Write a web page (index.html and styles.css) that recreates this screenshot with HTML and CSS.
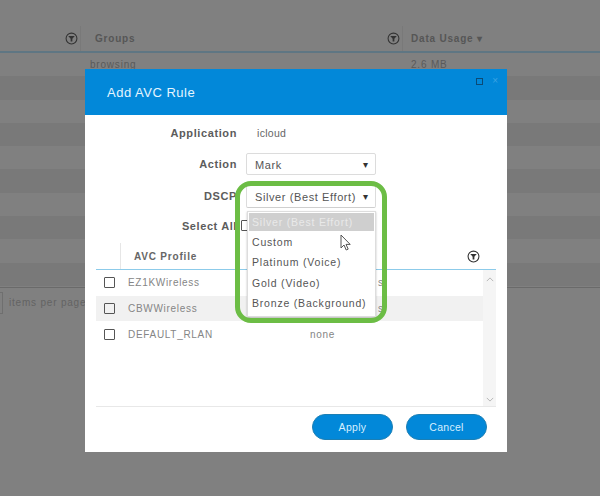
FILE: index.html
```html
<!DOCTYPE html>
<html lang="en">
<head>
  <meta charset="UTF-8">
  <title>Add AVC Rule</title>
  <link rel="stylesheet" href="styles.css">
</head>
<body>
  <!-- background table, dimmed by the overlay -->
  <div class="page">
    <div class="page-head">
      <div class="page-col col-first">
        <svg class="filter-icon" viewBox="0 0 12 12"><circle cx="6" cy="6" r="5" fill="none" stroke="currentColor" stroke-width="1"/><path d="M3 3.6h6L6.8 6.2v2.6H5.2V6.2z" fill="currentColor"/></svg>
      </div>
      <div class="page-col col-groups">
        <span>Groups</span>
        <svg class="filter-icon" viewBox="0 0 12 12"><circle cx="6" cy="6" r="5" fill="none" stroke="currentColor" stroke-width="1"/><path d="M3 3.6h6L6.8 6.2v2.6H5.2V6.2z" fill="currentColor"/></svg>
      </div>
      <div class="page-col col-usage">Data Usage &#9662;</div>
    </div>
    <div class="page-row"><span class="cell-groups">browsing</span><span>2.6 MB</span></div>
    <div class="page-row dark"></div>
    <div class="page-row"></div>
    <div class="page-row dark"></div>
    <div class="page-row"></div>
    <div class="page-row dark"></div>
    <div class="page-row"></div>
    <div class="page-row dark"></div>
    <div class="page-row"></div>
    <div class="page-row dark"></div>
    <div class="pager"><span class="pager-box"></span><span>items per page</span></div>
  </div>

  <div class="modal">
    <div class="modal-header">
      <h2>Add AVC Rule</h2>
      <div class="modal-tools">
        <span class="tool-max"></span>
        <span class="tool-close">&times;</span>
      </div>
    </div>

    <div class="form">
      <div class="form-row row-app">
        <label>Application</label>
        <span class="value">icloud</span>
      </div>
      <div class="form-row row-action">
        <label>Action</label>
        <div class="select">Mark<span class="caret">&#9662;</span></div>
      </div>
      <div class="form-row row-dscp">
        <label>DSCP</label>
        <div class="select select-open">Silver (Best Effort)<span class="caret">&#9662;</span>
          <ul class="dropdown">
            <li class="selected">Silver (Best Effort)</li>
            <li>Custom</li>
            <li>Platinum (Voice)</li>
            <li>Gold (Video)</li>
            <li>Bronze (Background)</li>
          </ul>
          <div class="highlight"></div>
          <svg class="cursor" viewBox="0 0 12 18"><path d="M1 1v13l3-3 2.2 5 2-.9L6 10.4h4.2z" fill="#fff" stroke="#555" stroke-width="1"/></svg>
        </div>
      </div>
      <div class="form-row row-all">
        <label>Select All</label>
        <span class="checkbox"></span>
      </div>
    </div>

    <div class="table">
      <div class="table-main">
        <div class="table-head">
          <div class="th-check"></div>
          <div class="th-profile">AVC Profile</div>
          <svg class="filter-icon" viewBox="0 0 12 12"><circle cx="6" cy="6" r="5" fill="none" stroke="currentColor" stroke-width="1"/><path d="M3 3.6h6L6.8 6.2v2.6H5.2V6.2z" fill="currentColor"/></svg>
        </div>
        <div class="table-body">
          <div class="table-rows">
            <div class="table-row"><span class="checkbox"></span><span class="profile">EZ1KWireless</span><span class="extra extra-cut">s</span></div>
            <div class="table-row shade"><span class="checkbox"></span><span class="profile">CBWWireless</span><span class="extra extra-cut">s</span></div>
            <div class="table-row"><span class="checkbox"></span><span class="profile">DEFAULT_RLAN</span><span class="extra">none</span></div>
          </div>
          <div class="scrollbar">
            <svg viewBox="0 0 10 6"><path d="M1 5l4-4 4 4" fill="none" stroke="#b5b5b5" stroke-width="1.2"/></svg>
            <svg viewBox="0 0 10 6"><path d="M1 1l4 4 4-4" fill="none" stroke="#b5b5b5" stroke-width="1.2"/></svg>
          </div>
        </div>
      </div>
    </div>

    <div class="modal-footer">
      <button>Apply</button>
      <button>Cancel</button>
    </div>
  </div>
</body>
</html>
```

FILE: styles.css
```css
/* page */
html, body {
  margin: 0;
  height: 100%;
}

body {
  position: relative;
  width: 600px;
  height: 496px;
  overflow: hidden;
  background-color: #808080;
  font-family: 'Liberation Sans', Arial, sans-serif;
  letter-spacing: 0.8px;
}

/* background table */
.page {
  padding-top: 26px;
  color: #4f4f4f;
  font-size: 10px;
}

.page-head {
  display: flex;
  height: 25px;
  border-bottom: 2px solid #5f7683;
  font-weight: bold;
  color: #565656;
}

.page-col {
  display: flex;
  align-items: center;
  justify-content: space-between;
  box-sizing: border-box;
}

.col-first {
  width: 81px;
  padding-right: 2px;
  border-right: 1px solid #797979;
  justify-content: flex-end;
}

.col-groups {
  width: 322px;
  padding-left: 14px;
  padding-right: 2px;
  border-right: 1px solid #797979;
}

.col-usage {
  padding-left: 8px;
}

.filter-icon {
  width: 13px;
  height: 13px;
  flex-shrink: 0;
  color: #333;
}

.page-row {
  display: flex;
  height: 23.3px;
  line-height: 23px;
  color: #5a5a5a;
}

.page-row.dark {
  background-color: #797979;
}

.cell-groups {
  width: 321px;
  padding-left: 90px;
}

.pager {
  display: flex;
  align-items: center;
  gap: 6px;
  margin-top: 1px;
  padding-top: 4px;
  border-top: 1px solid #6a6a6a;
  color: #636363;
}

.pager-box {
  width: 2px;
  height: 20px;
  border: 1px solid #6f6f6f;
  border-left: none;
}

/* modal */
.modal {
  position: absolute;
  left: 85px;
  top: 69px;
  width: 422px;
  height: 383px;
  display: flex;
  flex-direction: column;
  background-color: #ffffff;
  color: #555;
}

.modal-header {
  display: flex;
  align-items: center;
  height: 46px;
  flex-shrink: 0;
  padding: 0 22px;
  box-sizing: border-box;
  background-color: #0288d9;
}

h2 {
  margin: 0;
  font-size: 13px;
  font-weight: normal;
  color: #e4f5ff;
  letter-spacing: 0.5px;
}

.modal-tools {
  position: absolute;
  top: 8px;
  right: 8px;
  display: flex;
  align-items: center;
  gap: 9px;
}

.tool-max {
  width: 5px;
  height: 5px;
  border: 1.5px solid #0b4a76;
}

.tool-close {
  color: #3ba3e3;
  font-size: 10px;
  line-height: 8px;
}

/* form */
.form {
  display: flex;
  flex-direction: column;
  flex-shrink: 0;
}

.form-row {
  display: flex;
  align-items: center;
  gap: 9px;
}

.form-row label {
  width: 152px;
  text-align: right;
  font-size: 11px;
  font-weight: bold;
  letter-spacing: 0.6px;
  color: #5c5c5c;
}

.row-app {
  margin-top: 9px;
  height: 18px;
}

.value {
  margin-left: 11px;
  font-size: 10.5px;
  letter-spacing: 0.3px;
  color: #666;
}

.row-action {
  margin-top: 11px;
}

.row-dscp {
  margin-top: 9px;
}

.row-all {
  margin-top: 9px;
  height: 17px;
}

.row-all .checkbox {
  margin-left: -5px;
}

.select {
  position: relative;
  width: 130px;
  height: 22px;
  line-height: 22px;
  padding-left: 8px;
  box-sizing: border-box;
  border: 1px solid #dcdcdc;
  border-radius: 2px;
  font-size: 11px;
  letter-spacing: 0.6px;
  color: #555;
}

.caret {
  position: absolute;
  right: 6px;
  top: 0;
  font-size: 10px;
  color: #333;
}

.select-open {
  height: 24px;
  line-height: 24px;
  border-bottom-color: #cfcfcf;
}

.dropdown {
  position: absolute;
  left: 0;
  top: 26px;
  z-index: 2;
  width: 129px;
  margin: 0;
  padding: 1px 1px 2px;
  box-sizing: border-box;
  list-style: none;
  background-color: #fff;
  border: 1px solid #ddd;
  box-shadow: 0 1px 2px rgba(0, 0, 0, 0.25);
}

.dropdown li {
  height: 20.4px;
  line-height: 20px;
  padding-left: 3px;
  font-size: 10.5px;
  letter-spacing: 0.8px;
  color: #555;
  white-space: nowrap;
}

.dropdown li.selected {
  height: 18px;
  line-height: 18px;
  margin-bottom: 1px;
  background-color: #cfcfcf;
  color: #e9e9e9;
}

.highlight {
  position: absolute;
  z-index: 3;
  left: -12px;
  top: -4px;
  width: 152px;
  height: 142px;
  box-sizing: border-box;
  border: 5px solid #6cbd45;
  border-radius: 16px;
}

.cursor {
  position: absolute;
  z-index: 4;
  left: 93px;
  top: 49px;
  width: 12px;
  height: 18px;
}

.checkbox {
  flex-shrink: 0;
  width: 9px;
  height: 9px;
  border: 1px solid #555;
  border-radius: 1px;
}

/* AVC profile table */
.table {
  flex: 1;
  min-height: 0;
  padding: 0 11px;
}

.table-main {
  height: 100%;
  display: flex;
  flex-direction: column;
}

.table-head {
  display: flex;
  align-items: center;
  height: 26px;
  flex-shrink: 0;
  margin-top: 9px;
  border-bottom: 1px solid #8ccbea;
}

.th-check {
  width: 24px;
  height: 100%;
  border-right: 1px solid #e6e6e6;
}

.th-profile {
  flex: 1;
  padding-left: 13px;
  font-size: 10px;
  font-weight: bold;
  color: #666;
}

.table-head .filter-icon {
  margin-right: 16px;
}

.table-body {
  flex: 1;
  display: flex;
  min-height: 0;
}

.table-rows {
  flex: 1;
}

.table-row {
  display: flex;
  align-items: center;
  height: 25.7px;
  padding-left: 8px;
  font-size: 10px;
  color: #858585;
}

.table-row.shade {
  background-color: #f1f1f1;
}

.profile {
  width: 182px;
  margin-left: 13px;
  letter-spacing: 0.7px;
}

.extra {
  letter-spacing: 0.7px;
}

.extra-cut {
  margin-left: 68px;
}

.scrollbar {
  width: 13px;
  display: flex;
  flex-direction: column;
  justify-content: space-between;
  align-items: center;
  padding: 7px 0 4px;
  box-sizing: border-box;
  background-color: #f5f5f5;
}

.scrollbar svg {
  width: 8px;
  height: 5px;
}

/* footer */
.modal-footer {
  display: flex;
  justify-content: flex-end;
  gap: 13px;
  height: 46px;
  flex-shrink: 0;
  margin: 0 11px;
  padding: 7px 9px 0 0;
  box-sizing: border-box;
  border-top: 1px solid #e8e8e8;
}

button {
  width: 81px;
  height: 26px;
  border: 1px solid #1c7fb4;
  border-radius: 13px;
  background-color: #0288d9;
  color: #d6efff;
  font-family: inherit;
  font-size: 10.5px;
  letter-spacing: 0.3px;
}
```
